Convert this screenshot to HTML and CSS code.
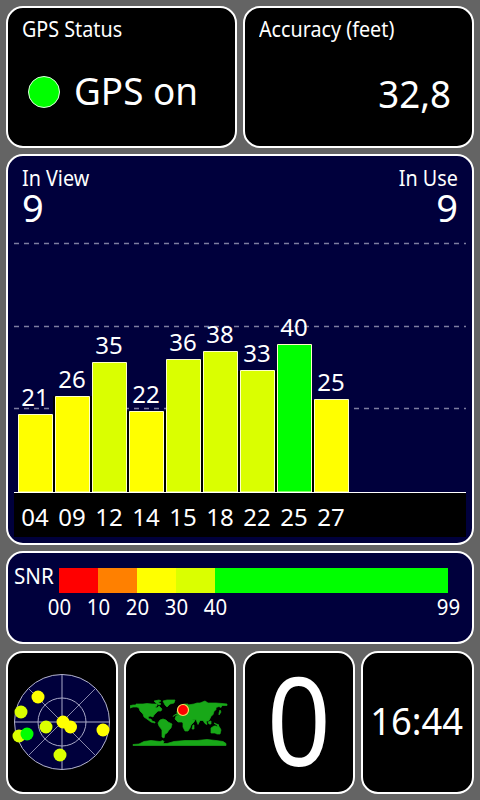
FILE: index.html
```html
<!DOCTYPE html>
<html lang="en">
<head>
<meta charset="utf-8">
<title>GPS Status</title>
<link rel="stylesheet" href="styles.css">
</head>
<body>
<main class="dashboard">
  <div class="row top">
    <section class="panel status">
      <h2 class="label">GPS Status</h2>
      <div class="state"><span class="lamp"></span><span class="state-text">GPS on</span></div>
    </section>
    <section class="panel accuracy">
      <h2 class="label">Accuracy (feet)</h2>
      <div class="value">32,8</div>
    </section>
  </div>
  <section class="panel blue satellites">
    <div class="counts">
      <div class="count"><span class="label">In View</span><span class="number">9</span></div>
      <div class="count right"><span class="label">In Use</span><span class="number">9</span></div>
    </div>
    <svg class="chart" viewBox="14 230 452 308" width="452" height="308">
      <g class="gridlines"><path d="M14 243.5H466M14 326.5H466M14 408.5H466"/></g>
      <path class="gaps" d="M53 396h2v96h-2zM90 396h2v96h-2zM127 411h2v81h-2zM164 411h2v81h-2zM201 360h2v132h-2zM238 371h2v121h-2zM275 371h2v121h-2zM312 400h2v92h-2z"/>
      <g class="bars">
        <path class="yellow" d="M18.5 414.5h34V492h-34zM55.5 396.5h34V492h-34zM129.5 411.5h34V492h-34zM314.5 399.5h34V492h-34z"/>
        <path class="lime" d="M92.5 362.5h34V492h-34zM166.5 359.5h34V492h-34zM203.5 351.5h34V492h-34zM240.5 370.5h34V492h-34z"/>
        <path class="green" d="M277.5 344.5h34V492h-34z"/>
      </g>
      <path class="axis-strip" d="M14 492H466V537H14z"/>
      <path class="axis-line" d="M14 492.5H466"/>
      <g class="chart-text">
        <text x="35" y="406">21</text><text x="72" y="388">26</text><text x="109" y="354">35</text>
        <text x="146" y="403">22</text><text x="183" y="351">36</text><text x="220" y="343">38</text>
        <text x="257" y="362">33</text><text x="294" y="336">40</text><text x="331" y="391">25</text>
        <text x="35" y="526">04</text><text x="72" y="526">09</text><text x="109" y="526">12</text>
        <text x="146" y="526">14</text><text x="183" y="526">15</text><text x="220" y="526">18</text>
        <text x="257" y="526">22</text><text x="294" y="526">25</text><text x="331" y="526">27</text>
      </g>
    </svg>
  </section>
  <section class="panel blue snr">
    <span class="snr-name label">SNR</span>
    <div class="scale">
      <div class="segments"><i class="red"></i><i class="orange"></i><i class="yellow"></i><i class="lime"></i><i class="green"></i></div>
      <div class="ticks"><span>00</span><span>10</span><span>20</span><span>30</span><span>40</span><span class="last">99</span></div>
    </div>
  </section>
  <div class="row bottom">
    <section class="panel center">
      <svg viewBox="12 672 100 100" width="100" height="100">
        <circle class="sky" cx="62" cy="722" r="47.5"/>
        <circle class="ring" cx="62" cy="722" r="24"/>
        <path class="ring" d="M14.5 722H109.5M62 674.5V769.5"/>
        <path class="spoke" d="M28.5 688.5L95.5 755.5M95.5 688.5L28.5 755.5"/>
        <g class="sat-lime"><circle cx="21" cy="712" r="6.5"/><circle cx="19" cy="736" r="6.5"/><circle cx="46" cy="727" r="6.5"/><circle cx="60" cy="755" r="6.5"/></g>
        <circle class="sat-green" cx="27" cy="734" r="6.5"/>
        <g class="sat-yellow"><circle cx="38" cy="697" r="6.5"/><circle cx="63" cy="722" r="6.5"/><circle cx="70.5" cy="727" r="6.5"/><circle cx="103" cy="730" r="6.5"/></g>
      </svg>
    </section>
    <section class="panel center">
      <svg viewBox="130 696 100 52" width="100" height="52">
        <g class="land">
          <path d="M133 705h3v-1h7l4-.5 5 .5 5 0 0 2-2 1 2 1 2-2 3 3-1 2-3 0-2 2-2 2-1 2-3-1-2 1 1 2 2 0 1 2 3 1v1l-4-1-4-3-3-2-1-3-3-3-1-3-2-1h-4l-3 1 1-1-2-1z"/>
          <path d="M160 720l3-1 3 1 2 2 4 2-1 4-2 2-2 3-2 1-1 4-2-1v-7l-3-4-1-3z"/>
          <path d="M154 701l5-1 2 1-3 1 3 2-2 1-3-2zM163 701l4-1h8l-1 3-4 1-3 3-2-2z"/>
          <path d="M176 716l4-1.500 6 .5 4 1 2 4 3 0-1 2-3 3-1 3-2 3-3 0-2-4v-4l-1-1-4 0-3-3z"/>
          <path d="M193 725h1v4l-2 0z"/>
          <path d="M177 714v-3l3-2 0-3 4-2 4 0 0 1 6-1 3-1 3 0 5-2 3 2 8 0 6 .5 5 .5v1.500h-5l-1 2-2-1-3 1 0 2-2 2-1 3-2 2-2 4-3 1 1 3-2-1-2-3-3 0-2 4-2-5-3 0-1 2-3 1-3-5-5-1v-2l-6 0-2 2z"/>
          <path d="M204 720l3 4-2-1zM208 722l3-1v3h-2zM214 723l5 2-1 1zM219 713l1-3 1 2-2 3z"/>
          <path d="M211 728l3-2 2 0 1 1 1-2 2 3 1 2-1 4-3 0-2-1-4 0z"/>
          <path d="M133 745.500v-1l6-.5 5-2.500 7-1 9 1 3-1 1 1-1 2 4 0 7-2 11-1 12 0 10-1 9 1 7 1 3 2 0 2z"/>
        </g>
        <circle class="here" cx="183" cy="710" r="5.5"/>
      </svg>
    </section>
    <section class="panel center"><span class="speed">0</span></section>
    <section class="panel center"><span class="clock">16:44</span></section>
  </div>
</main>
</body>
</html>
```
FILE: styles.css
```css
* { box-sizing: border-box; }
body {
  margin: 0;
  width: 480px;
  height: 800px;
  overflow: hidden;
  background: #646464;
  color: #fff;
  font-family: "Noto Sans", sans-serif;
}
.dashboard { display: flex; flex-direction: column; padding: 6px; }
.panel { border: 2px solid #fff; border-radius: 17px; background: #000; }
.blue { background: #00003c; }
.row { display: grid; }
.top { grid-template-columns: 231px 231px; column-gap: 6px; height: 142px; }
.label {
  display: block;
  margin: 0;
  font-size: 21px;
  font-weight: 400;
  line-height: 28px;
  white-space: nowrap;
  transform: scaleX(.94);
  transform-origin: left;
}
.status, .accuracy { padding: 7px 14px 0; }
.state { display: flex; align-items: center; gap: 14px; margin-top: 21px; padding-left: 6px; height: 56px; }
.lamp { width: 32px; height: 32px; border: 1.5px solid #dfd; border-radius: 50%; background: #0f0; }
.state-text { height: 58px; font-size: 38px; line-height: 54px; transform: scaleX(.97); transform-origin: left; }
.value { margin-top: 22px; padding-right: 7px; font-size: 38px; line-height: 56px; text-align: right; transform: scaleX(.965); transform-origin: 192px 0; }
.satellites { height: 391px; margin-top: 6px; padding: 8px 6px 0; }
.counts { display: flex; justify-content: space-between; height: 66px; padding: 0 8px; }
.number { display: block; font-size: 38px; line-height: 31px; }
.right { text-align: right; }
.right .label { transform-origin: right; }
.chart { display: block; }
.gridlines { fill: none; stroke: #7d7da0; stroke-width: 1.5; stroke-dasharray: 5 5; }
.gaps, .axis-strip { fill: #000; }
.bars { stroke: #ffffc8; stroke-width: 1; }
.bars .yellow { fill: #ff0; }
.bars .lime { fill: #daff00; }
.bars .green { fill: #0f0; }
.axis-line { stroke: #fff; }
.chart-text { fill: #fff; font-size: 24px; text-anchor: middle; }
.snr { display: flex; height: 93px; margin-top: 6px; padding: 15px 24px 0 6px; }
.snr-name { width: 45px; height: 16px; line-height: 16px; transform: scaleX(.98); }
.scale { width: 389px; }
.segments { display: grid; grid-template-columns: repeat(4, 39px) 1fr; height: 25px; }
.red { background: #f00; }
.orange { background: #ff8000; }
.yellow { background: #ff0; }
.lime { background: #daff00; }
.green { background: #0f0; }
.ticks { display: flex; margin-left: -19.5px; width: 428px; font-size: 21px; line-height: 28px; }
.ticks span { width: 39px; text-align: center; transform: scaleX(.97); }
.ticks .last { margin-left: auto; }
.bottom { grid-template-columns: 112px 112px 112px 113px; justify-content: space-between; height: 143px; margin-top: 7px; }
.center { display: flex; align-items: center; justify-content: center; }
.center svg { margin-bottom: 2px; }
.sky { fill: #00003c; stroke: #b4b4cd; }
.ring { fill: none; stroke: #aaaac8; }
.spoke { stroke: #aaaac8; stroke-width: .8; }
.sat-lime { fill: #daff00; }
.sat-yellow { fill: #ff0; }
.sat-green { fill: #0f0; }
.land { fill: #18a818; stroke: #18a818; stroke-width: .7; }
.here { fill: #f00; stroke: #ffe060; stroke-width: 1.2; }
.speed { margin-bottom: 7px; font-size: 122px; line-height: 120px; transform: scaleX(.92); }
.clock { margin: 0 2px 5px 0; font-size: 38px; line-height: 50px; transform: scaleX(.955); }
```
